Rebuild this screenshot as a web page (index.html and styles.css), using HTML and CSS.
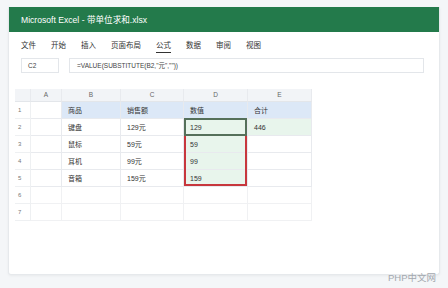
FILE: index.html
```html
<!DOCTYPE html>
<html lang="zh">
<head>
    <meta charset="UTF-8">
    <title>Microsoft Excel - 带单位求和.xlsx</title>
    <link rel="stylesheet" href="styles.css">
</head>
<body>
    <div class="window">
        <div class="titlebar">Microsoft Excel - 带单位求和.xlsx</div>
        <div class="tabs">
            <span>文件</span>
            <span>开始</span>
            <span>插入</span>
            <span>页面布局</span>
            <span class="active">公式</span>
            <span>数据</span>
            <span>审阅</span>
            <span>视图</span>
        </div>
        <div class="formula-row">
            <div class="namebox">C2</div>
            <div class="formula">=VALUE(SUBSTITUTE(B2,"元",""))</div>
        </div>
        <div class="sheet">
            <div class="corner"></div>
            <div class="colhead">A</div>
            <div class="colhead">B</div>
            <div class="colhead">C</div>
            <div class="colhead">D</div>
            <div class="colhead">E</div>

            <div class="rowhead">1</div>
            <div class="cell"></div>
            <div class="cell head">商品</div>
            <div class="cell head">销售额</div>
            <div class="cell head">数值</div>
            <div class="cell head">合计</div>

            <div class="rowhead">2</div>
            <div class="cell"></div>
            <div class="cell">键盘</div>
            <div class="cell">129元</div>
            <div class="cell num">129</div>
            <div class="cell num">446</div>

            <div class="rowhead">3</div>
            <div class="cell"></div>
            <div class="cell">鼠标</div>
            <div class="cell">59元</div>
            <div class="cell num">59</div>
            <div class="cell"></div>

            <div class="rowhead">4</div>
            <div class="cell"></div>
            <div class="cell">耳机</div>
            <div class="cell">99元</div>
            <div class="cell num">99</div>
            <div class="cell"></div>

            <div class="rowhead">5</div>
            <div class="cell"></div>
            <div class="cell">音箱</div>
            <div class="cell">159元</div>
            <div class="cell num">159</div>
            <div class="cell"></div>

            <div class="rowhead">6</div>
            <div class="cell faint"></div>
            <div class="cell faint"></div>
            <div class="cell faint"></div>
            <div class="cell faint"></div>
            <div class="cell faint"></div>

            <div class="rowhead">7</div>
            <div class="cell faint"></div>
            <div class="cell faint"></div>
            <div class="cell faint"></div>
            <div class="cell faint"></div>
            <div class="cell faint"></div>

            <div class="sel-active"></div>
            <div class="sel-range"></div>
        </div>
    </div>
    <div class="watermark">PHP中文网</div>
</body>
</html>
```

FILE: styles.css
```css
body {
    margin: 0;
    width: 448px;
    height: 288px;
    background-color: #f4f6f8;
    font-family: "Liberation Sans", "Noto Sans CJK SC", sans-serif;
    color: #333;
    position: relative;
    overflow: hidden;
}

.window {
    margin: 7px 0 0 8px;
    width: 432px;
    height: 268px;
    background-color: #fff;
    border: 1px solid #e6e9ec;
    border-top: none;
    border-radius: 0 0 3px 3px;
    box-sizing: border-box;
    box-shadow: 0 1px 3px rgba(0, 0, 0, 0.05);
}

.titlebar {
    height: 25px;
    background-color: #237a4b;
    color: #fff;
    font-size: 8.6px;
    line-height: 27px;
    padding-left: 12px;
}

.tabs {
    display: flex;
    gap: 15px;
    padding: 9px 12px 0;
    height: 26px;
    box-sizing: border-box;
    font-size: 7.5px;
    line-height: 10px;
    color: #333;
}

.tabs .active {
    border-bottom: 1px solid #333;
    height: 11px;
}

.formula-row {
    display: flex;
    gap: 10px;
    padding: 0 15px 0 12px;
    height: 15px;
}

.namebox,
.formula {
    border: 1px solid #e3e6ea;
    box-sizing: border-box;
    height: 15px;
    font-size: 6.5px;
    line-height: 13px;
    color: #444;
}

.namebox {
    width: 38px;
    padding-left: 6px;
}

.formula {
    flex: 1;
    padding-left: 7px;
}

.sheet {
    position: relative;
    display: grid;
    grid-template-columns: 16px 31px 59px 63px 64px 64px;
    grid-template-rows: 13px repeat(7, 17px);
    margin: 16px 0 0 6px;
    width: 297px;
    font-size: 7px;
}

.corner,
.colhead {
    background-color: #f2f4f7;
    border-right: 1px solid #e8eaee;
    border-bottom: 1px solid #e3e6ea;
}

.colhead {
    text-align: center;
    line-height: 12px;
    color: #666;
    font-size: 6.5px;
}

.rowhead {
    border-right: 1px solid #eef0f2;
    border-bottom: 1px solid #eef0f2;
    padding-left: 3px;
    line-height: 17px;
    color: #777;
    font-size: 6px;
}

.cell {
    border-right: 1px solid #e8eaee;
    border-bottom: 1px solid #e8eaee;
    line-height: 17px;
    padding-left: 6px;
    color: #333;
}

.cell.faint {
    border-color: #f0f1f3;
}

.cell.head {
    background-color: #dce8f7;
}

.cell.num {
    background-color: #e8f5ec;
}

.sel-active {
    position: absolute;
    left: 169px;
    top: 29px;
    width: 63px;
    height: 18px;
    border: 2px solid #55705a;
    box-sizing: border-box;
}

.sel-range {
    position: absolute;
    left: 169px;
    top: 47px;
    width: 63px;
    height: 50px;
    border: 2px solid #c7373d;
    border-top: none;
    box-sizing: border-box;
}

.watermark {
    position: absolute;
    right: 12px;
    bottom: 4px;
    font-size: 9.5px;
    color: #a3a8ae;
}
```
